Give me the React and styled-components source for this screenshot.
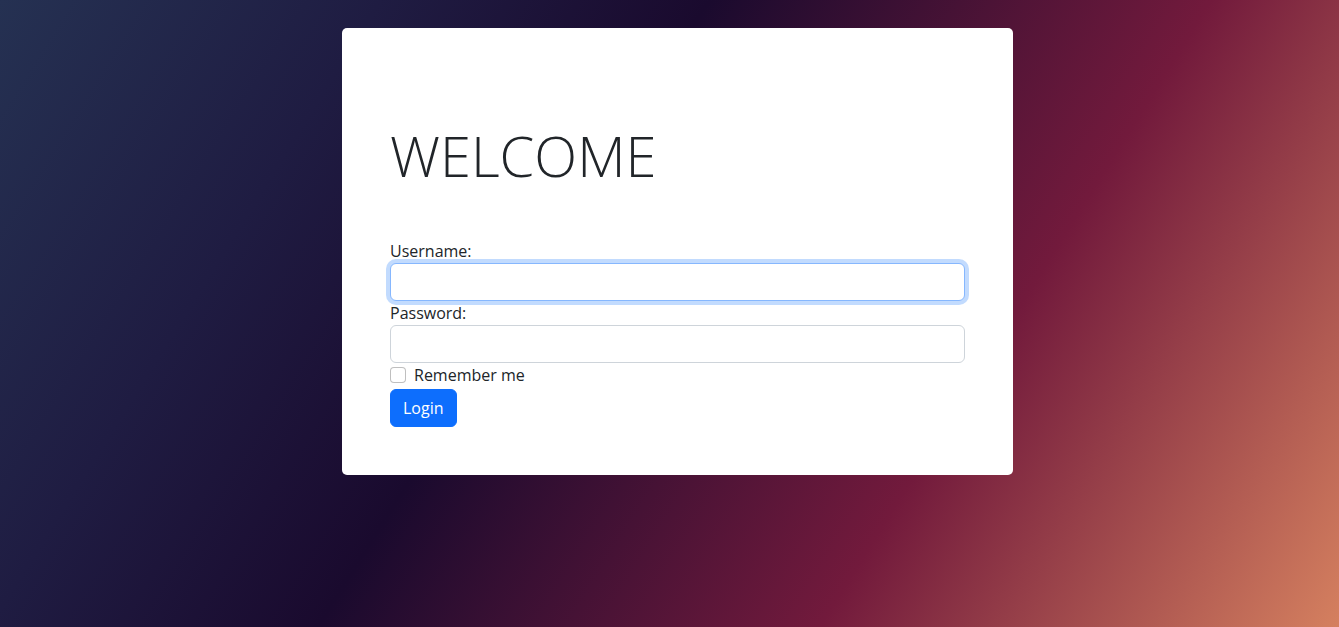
import React from "react";
import styled, { createGlobalStyle } from "styled-components";

const Global = createGlobalStyle`
  html, body { margin: 0; padding: 0; }
  body {
    font-family: "Open Sans", "Noto Sans", sans-serif;
    color: #212529;
    font-size: 16px;
    line-height: 1.5;
  }
  * { box-sizing: border-box; }
`;

const Page = styled.div`
  min-height: 100vh;
  background: linear-gradient(122deg, #253152 0%, #1f1c42 22%, #1a0a2e 41%, #721a3c 70%, #d5805f 100%);
  display: flex;
  justify-content: center;
  align-items: flex-start;
  padding: 28px 0 0 16px;
`;

const Card = styled.div`
  width: 671px;
  background: #fff;
  border-radius: 5px;
  padding: 48px;
`;

const Title = styled.h1`
  margin: 46px 0 50px;
  font-family: "Open Sans", sans-serif;
  font-weight: 300;
  font-size: 56px;
  line-height: 1.2;
  color: #212529;
`;

const Form = styled.form`
  display: flex;
  flex-direction: column;
  align-items: flex-start;
`;

const Label = styled.label`
  display: block;
  font-size: 16px;
  line-height: 24px;
`;

const Input = styled.input`
  display: block;
  width: 100%;
  height: 38px;
  padding: 6px 12px;
  font: inherit;
  font-size: 16px;
  line-height: 24px;
  color: #212529;
  caret-color: #212529;
  background: #fff;
  border: 1px solid #ced4da;
  border-radius: 6px;
  outline: none;
  &:focus {
    border-color: #86b7fe;
    box-shadow: 0 0 0 4px rgba(13, 110, 253, 0.25);
  }
`;

const Check = styled.div`
  display: flex;
  align-items: center;
  gap: 8px;
  height: 24px;
  margin-bottom: 2px;
`;

const Box = styled.input`
  appearance: none;
  margin: 0;
  width: 16px;
  height: 16px;
  border: 1px solid rgba(0, 0, 0, 0.25);
  border-radius: 4px;
  background: #fff;
`;

const Button = styled.button`
  font: inherit;
  font-size: 16px;
  line-height: 24px;
  padding: 6px 12px;
  color: #fff;
  background: #0d6efd;
  border: 1px solid #0d6efd;
  border-radius: 6px;
`;

export default function App() {
  return (
    <>
      <Global />
      <Page>
        <Card>
          <Title>WELCOME</Title>
          <Form onSubmit={(e) => e.preventDefault()}>
            <Label htmlFor="username">Username:</Label>
            <Input id="username" type="text" autoFocus />
            <Label htmlFor="password">Password:</Label>
            <Input id="password" type="password" />
            <Check>
              <Box id="remember" type="checkbox" />
              <Label htmlFor="remember">Remember me</Label>
            </Check>
            <Button type="submit">Login</Button>
          </Form>
        </Card>
      </Page>
    </>
  );
}
